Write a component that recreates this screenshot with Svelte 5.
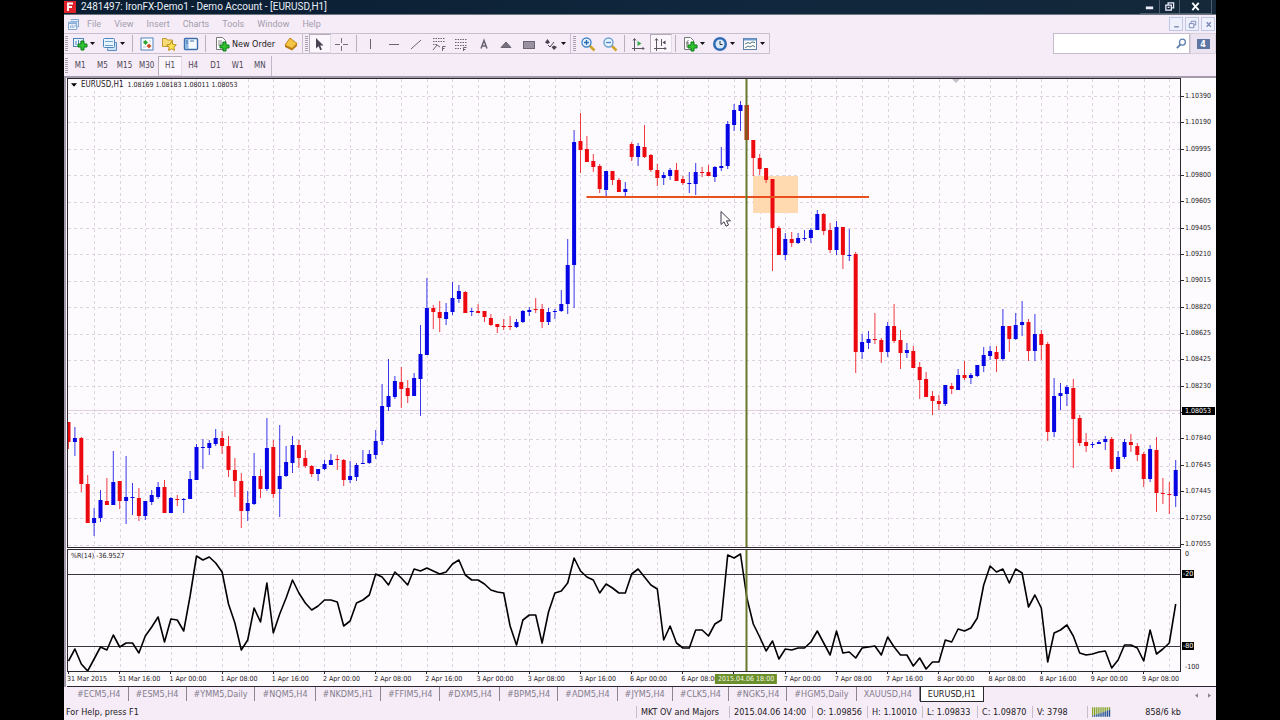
<script lang="ts">
	const STEP = 6.4;

	// high, body top, body bottom, low, colour
	const candleData = `
422 422 442 449 r|427 438 442 456 b|437 438 484 492 r|475 484 523 523 r|508 518 523 536 b|490 500 518 522 b
478 501 505 505 r|451 482 505 505 b|481 481 501 509 r|456 497 501 524 b|483 497 498 515 b|488 498 516 521 r
501 501 516 520 b|490 495 502 505 b|482 487 497 499 b|480 487 513 513 r|497 498 513 513 b|495 499 500 506 r
498 499 500 513 b|471 479 499 499 b|444 447 480 480 b|439 447 448 469 b|440 443 448 455 b|429 438 444 446 b
431 438 446 454 r|436 446 470 477 r|458 470 481 497 r|473 481 511 528 r|491 503 511 521 b|453 476 504 505 b
469 476 489 498 r|418 448 489 491 b|440 447 494 498 r|425 476 489 517 b|446 462 476 477 b|436 445 463 473 b
440 445 458 468 r|450 458 466 468 r|465 466 474 477 r|469 469 474 481 b|460 464 469 470 b|454 460 465 465 b
455 459 460 470 r|459 460 480 486 r|461 476 480 483 b|463 465 477 481 b|450 463 464 464 b|450 454 463 464 b
430 441 455 459 b|384 406 441 445 b|359 396 407 411 b|376 381 397 399 b|367 382 389 408 r|380 388 396 403 r
373 378 396 396 b|325 354 379 416 b|278 308 355 355 b|305 308 312 329 r|301 312 318 332 r|303 312 319 325 b
282 298 312 315 b|285 291 299 303 b|291 292 313 313 r|308 311 312 316 b|304 311 313 313 r|311 311 317 322 r
314 318 325 326 r|324 324 327 333 r|319 326 327 330 r|316 326 327 330 r|319 322 327 328 b|310 311 322 323 b
307 310 312 316 b|298 309 310 313 r|304 309 322 328 r|308 312 322 325 b|309 311 312 319 b|290 304 311 312 b
239 265 304 314 b|130 142 265 308 b|113 141 150 173 r|136 149 162 162 r|154 161 167 172 r|164 166 189 193 r
171 171 190 196 b|171 171 180 185 r|178 180 192 192 r|182 189 192 196 b|142 144 157 161 r|143 146 157 166 b
125 147 157 158 r|154 155 170 172 r|164 170 178 186 r|172 175 178 185 b|168 170 176 180 b|163 170 181 181 r
176 179 183 185 r|172 183 184 193 b|163 172 184 195 b|167 172 173 177 r|165 172 176 176 r|166 167 177 182 b
147 166 168 171 b|121 124 166 169 b|104 110 125 131 b|101 105 111 131 b|105 105 140 140 r|140 140 158 176 r
154 158 169 175 r|168 168 180 183 r|179 179 228 271 r|226 228 255 255 r|233 239 255 260 b|232 239 243 247 r
233 238 243 244 b|230 238 239 241 b|228 230 238 243 b|210 214 230 230 b|213 214 231 235 r|223 230 250 253 r
221 227 250 255 b|227 227 255 269 r|229 255 256 261 b|252 254 352 373 r|334 342 352 359 b|331 339 343 349 b
313 339 340 344 r|338 340 352 363 r|322 326 352 357 b|304 326 341 343 r|330 340 353 369 r|343 350 353 358 b
346 351 368 368 r|362 367 380 399 r|372 379 397 397 r|391 396 401 415 r|395 401 404 410 r|385 385 404 406 b
383 386 389 394 r|369 375 390 390 b|361 375 378 380 r|373 375 378 384 b|365 365 376 377 b|347 355 366 372 b
346 351 356 360 b|346 352 359 372 r|309 326 359 361 b|326 326 339 352 r|313 325 339 340 b|301 322 325 336 b
319 322 351 361 r|314 334 351 361 b|330 334 345 360 r|342 344 432 441 r|378 396 432 437 b|383 393 396 410 b
385 387 394 406 b|379 388 419 468 r|415 418 443 446 r|433 442 446 452 r|442 444 445 448 b|440 442 444 444 b
436 439 442 450 b|437 439 469 472 r|451 457 469 469 b|439 442 457 459 b|434 442 445 452 r|443 446 455 461 r
452 454 479 487 r|445 449 479 482 b|437 450 493 512 r|478 493 494 504 r|482 494 495 514 r|460 470 496 507 b`;

	const candles = candleData
		.trim()
		.split(/[|\n]/)
		.map((row, i) => {
			const [high, top, bottom, low, dir] = row.split(' ');
			return {
				x: 0.5 + i * STEP,
				high: +high,
				top: +top,
				height: Math.max(+bottom - +top, 1),
				low: +low,
				up: dir === 'b'
			};
		});

	const percentR = [
		661, 649, 664, 671, 659, 647, 650, 635, 647, 643, 643, 653, 636, 627, 617, 642, 619, 620, 631, 596,
		556, 560, 557, 563, 572, 604, 623, 650, 640, 608, 622, 583, 633, 614, 598, 580, 593, 603, 610, 606,
		600, 600, 602, 626, 621, 603, 600, 595, 574, 577, 585, 572, 578, 585, 569, 571, 568, 571, 574, 572,
		564, 560, 575, 580, 580, 584, 590, 592, 593, 626, 645, 620, 615, 615, 643, 612, 593, 591, 583, 558,
		571, 577, 580, 593, 584, 588, 593, 593, 574, 569, 577, 585, 589, 640, 626, 643, 648, 648, 630, 630,
		636, 624, 620, 555, 558, 554, 598, 624, 637, 651, 641, 659, 649, 650, 648, 648, 642, 631, 643, 655,
		631, 653, 652, 658, 648, 647, 646, 655, 637, 647, 655, 655, 666, 658, 669, 662, 662, 640, 642, 629,
		631, 628, 618, 585, 566, 572, 569, 583, 569, 573, 607, 595, 608, 662, 633, 630, 625, 636, 653, 655,
		654, 652, 651, 668, 660, 645, 645, 648, 661, 630, 654, 649, 643, 604
	];
	const linePoints = percentR.map((y, i) => `${(0.5 + i * STEP).toFixed(1)},${y}`).join(' ');

	const gridX = Array.from({ length: 43 }, (_, i) => Math.round(26 + i * 25.6) + 0.5);
	const gridY = Array.from({ length: 18 }, (_, i) => Math.round(96 + i * 26.4) + 0.5);

	const prices = [
		'1.10390', '1.10190', '1.09995', '1.09800', '1.09605', '1.09405', '1.09210', '1.09015', '1.08820',
		'1.08625', '1.08425', '1.08230', '1.08035', '1.07840', '1.07645', '1.07445', '1.07250', '1.07055'
	];
	const days = ['1 Apr', '2 Apr', '3 Apr', '6 Apr', '7 Apr', '8 Apr', '9 Apr'];
	const cursorSlot = '6 Apr 16:00';
	const times = [
		'31 Mar 2015',
		'31 Mar 16:00',
		...days.flatMap((d) => ['00:00', '08:00', '16:00'].map((t) => `${d} ${t}`))
	].slice(0, 22);

	const menus = ['File', 'View', 'Insert', 'Charts', 'Tools', 'Window', 'Help'];
	const timeframes = ['M1', 'M5', 'M15', 'M30', 'H1', 'H4', 'D1', 'W1', 'MN'];
	const tabs = [
		'#ECM5,H4', '#ESM5,H4', '#YMM5,Daily', '#NQM5,H4', '#NKDM5,H1', '#FFIM5,H4', '#DXM5,H4', '#BPM5,H4',
		'#ADM5,H4', '#JYM5,H4', '#CLK5,H4', '#NGK5,H4', '#HGM5,Daily', 'XAUUSD,H4', 'EURUSD,H1'
	];
	const drawTools = ['Vertical line', 'Horizontal line', 'Trendline', 'Fibonacci fan', 'Fibonacci retracement', 'Text', 'Triangle', 'Rectangle'];

	let timeframe = $state('H1');
	let activeTab = $state('EURUSD,H1');
	let search = $state('');
</script>

{#snippet plus(x: number, y: number)}
	<path
		d="M{x + 3} {y}h3v3h3v3h-3v3h-3v-3h-3v-3h3z"
		fill="#2fc32f"
		stroke="#0b7a18"
		stroke-width="1"
	/>
{/snippet}

{#snippet caret()}
	<svg class="caret" viewBox="0 0 5 3"><path d="M0 0h5L2.5 3z" fill="#111" /></svg>
{/snippet}

<div class="app">
	<header class="title">
		<svg class="logo" viewBox="0 0 12 12">
			<rect width="12" height="12" fill="#e0232b" />
			<path d="M4 10V2.5h5M4 6h4" fill="none" stroke="#fff" stroke-width="1.8" />
		</svg>
		<h1>2481497: IronFX-Demo1 - Demo Account - [EURUSD,H1]</h1>
		<div class="window-buttons">
			<button aria-label="Minimize"><svg viewBox="0 0 12 12"><path d="M2 6h8v3H2z" fill="#eef" /></svg></button>
			<button aria-label="Restore">
				<svg viewBox="0 0 12 12"><path d="M4.500 4V2h6v5.500h-2M2 4.500h6v5.500H2zM4 7h2" fill="none" stroke="#eef" stroke-width="1.4" /></svg>
			</button>
			<button class="wide" aria-label="Close"><svg viewBox="0 0 12 12"><path d="M2.500 2l7 8M9.500 2l-7 8" stroke="#fff" stroke-width="2" /></svg></button>
		</div>
	</header>

	<nav class="menu">
		<svg class="menu-icon" viewBox="0 0 12 12">
			<path d="M3 .5h8.500v8H9.500M.5 3.500h9v8h-9z" fill="#fff" stroke="#6f9cd0" />
			<path d="M3 2.500h8M1 5h8M2.500 7v3M4.500 6v4M6.500 7v3M8 6v2" stroke="#6f9cd0" />
		</svg>
		{#each menus as item}
			<button>{item}</button>
		{/each}
		<div class="mdi-buttons">
			<button aria-label="Minimize chart"><svg viewBox="0 0 12 12"><path d="M3.500 8.500h5" stroke="#7887b5" stroke-width="1.500" /></svg></button>
			<button aria-label="Restore chart">
				<svg viewBox="0 0 12 12"><path d="M4.500 4.500v-2h5v4h-2M2.500 5h5v4.500h-5z" fill="none" stroke="#7887b5" /></svg>
			</button>
			<button aria-label="Close chart"><svg viewBox="0 0 12 12"><path d="M4 3.500l4.500 5M8.500 3.500l-4.500 5" stroke="#7887b5" stroke-width="1.400" /></svg></button>
		</div>
	</nav>

	<div class="toolbar">
		<div class="group">
			<span class="grip"></span>
			<button class="drop" aria-label="New chart">
				<svg viewBox="0 0 16 16">
					<rect x="1.500" y="2.500" width="10" height="8" fill="#e9f3fc" stroke="#4d86bd" />
					<path d="M4 9V5M6.500 8V4M9 8V5" stroke="#4d86bd" />
					{@render plus(6, 5)}
				</svg>
				{@render caret()}
			</button>
			<button class="drop" aria-label="Profiles">
				<svg viewBox="0 0 16 16">
					<path d="M5.500 12.500v2h9v-8h-2" fill="#cfe1f4" stroke="#5a8cc0" />
					<rect x="1.500" y="2.500" width="11" height="9" rx="1" fill="#eaf4fd" stroke="#4d86bd" />
					<path d="M3 5.500h8M3 9.500h8" stroke="#6ea3d6" />
				</svg>
				{@render caret()}
			</button>
			<span class="sep"></span>
			<button aria-label="Market watch">
				<svg viewBox="0 0 16 16">
					<rect x="2" y="2" width="12" height="12" fill="#fff" stroke="#4d86bd" />
					<path d="M4 5h2M10 5h2M4 11h3" stroke="#a9c6e3" />
					<path d="M6.500 4l2.500 2.500-2.500 2.500L4 6.500z" fill="#2ca52c" />
					<path d="M10 7.500l2.500 2.500-2.500 2.500L7.500 10z" fill="#d1502b" />
				</svg>
			</button>
			<button aria-label="Navigator">
				<svg viewBox="0 0 16 16">
					<path d="M1.500 10.500v-8h4l1 1.500h5v6.500z" fill="#f7dd7a" stroke="#c19a2f" />
					<path d="M10.500 5.500l1.500 3 3.300.4-2.400 2.300.6 3.200-3-1.600-3 1.600.6-3.200L5.700 8.900 9 8.500z" fill="#ffe357" stroke="#bd8f17" />
				</svg>
			</button>
			<button aria-label="Terminal">
				<svg viewBox="0 0 16 16">
					<rect x="1.500" y="2.500" width="13" height="11" rx="1" fill="#f5faff" stroke="#3d6fab" stroke-width="1.400" />
					<path d="M2 3h3.500v10H2z" fill="#8fb9e2" /><path d="M7 5h4M3 5h2M3 7h2" stroke="#3d6fab" />
				</svg>
			</button>
			<span class="sep"></span>
			<button class="order">
				<svg viewBox="0 0 16 16">
					<path d="M2.500 1.500h6l3 3v9h-9z" fill="#fff" stroke="#777" />
					<path d="M4 5h4M4 7h5M4 9h3" stroke="#888" />
					{@render plus(6, 6)}
				</svg>
				New Order
			</button>
			<button aria-label="MetaEditor">
				<svg viewBox="0 0 16 16">
					<path d="M2 9l5-7 7 5.500v2.500l-5 4.500L2 11z" fill="#b87a14" />
					<path d="M2 9l5-7 7 5.500-5 5z" fill="#f4c544" stroke="#b87a14" stroke-width=".8" />
				</svg>
			</button>
		</div>
		<div class="group">
			<span class="grip"></span>
			<button class="pressed" aria-label="Cursor">
				<svg viewBox="0 0 16 16"><path d="M4 2v10.500l2.500-2.300 1.800 4 1.700-.8-1.800-3.900h3.300z" fill="#4b4352" /></svg>
			</button>
			<button aria-label="Crosshair">
				<svg viewBox="0 0 16 16"><path d="M7.500 2v5M7.500 10v5M1 8.500h5M9 8.500h5" stroke="#776e7d" /></svg>
			</button>
			<span class="sep"></span>
			<div class="draw">
				{#each drawTools as tool, i}
					<button aria-label={tool}>
						<svg viewBox="0 0 16 16" fill="none" stroke="#6b6371">
							{#if i === 0}
								<path d="M7.500 3v10" />
							{:else if i === 1}
								<path d="M3 8.500h10" />
							{:else if i === 2}
								<path d="M3 13L13 4" />
							{:else if i === 3}
								<path d="M2 2.500h12M2 5.500h12M2 8.500h4" stroke-dasharray="1.500 1" />
								<path d="M2 14l4-5 3 2M11.500 15v-4.500h3M11.500 12.500h2" />
							{:else if i === 4}
								<path d="M2 3.500h12M2 6.500h12M2 9.500h12M2 12.500h6" stroke-dasharray="1.500 1" />
								<path d="M10.500 15v-3.500h3M10.500 13.500h2" />
							{:else if i === 5}
								<path d="M5 12.500L8 4.500l3 8M6 10h4" stroke-width="1.500" />
							{:else if i === 6}
								<path d="M3 11.500L8 6l5 5.500z" fill="#77707d" />
							{:else}
								<rect x="2.500" y="5.500" width="11" height="7" fill="#99919f" />
							{/if}
						</svg>
					</button>
				{/each}
			</div>
			<button class="drop" aria-label="Arrows">
				<svg viewBox="0 0 16 16">
					<path d="M4.500 3L7 6.500 4.500 8 2 6.500zM11 9.500l3 1.500-3 3-2.500-3z" fill="#4b4352" />
					<path d="M5 9l2 2 4-5" fill="none" stroke="#4b4352" />
				</svg>
				{@render caret()}
			</button>
		</div>
		<div class="group">
			<span class="grip"></span>
			<button aria-label="Zoom in">
				<svg viewBox="0 0 16 16">
					<path d="M9.500 9.500l5 5" stroke="#d0a42b" stroke-width="2.500" />
					<circle cx="6.500" cy="6.500" r="4.500" fill="#eaf5ff" stroke="#4687c9" stroke-width="1.400" />
					<path d="M4 6.500h5M6.500 4v5" stroke="#2a6db5" stroke-width="1.400" />
				</svg>
			</button>
			<button aria-label="Zoom out">
				<svg viewBox="0 0 16 16">
					<path d="M9.500 9.500l5 5" stroke="#d0a42b" stroke-width="2.500" />
					<circle cx="6.500" cy="6.500" r="4.500" fill="#eaf5ff" stroke="#6ba0d3" stroke-width="1.400" />
					<path d="M4 6.500h5" stroke="#4687c9" stroke-width="1.400" />
				</svg>
			</button>
			<span class="sep"></span>
			<button aria-label="Auto scroll">
				<svg viewBox="0 0 16 16">
					<path d="M3.500 3v12M1 12.500h12M2 4.500l1.500-2L5 4.500M11.500 11l1.500 1.500-1.500 1.500" fill="none" stroke="#5d5663" />
					<path d="M6.500 5v5l4-2.500z" fill="#35a845" />
				</svg>
			</button>
			<button class="pressed" aria-label="Chart shift">
				<svg viewBox="0 0 16 16">
					<path d="M3.500 3v12M1 12.500h12M2 4.500l1.500-2L5 4.500M11.500 11l1.500 1.500-1.500 1.500M8.500 3v7" fill="none" stroke="#5d5663" />
					<path d="M12.500 4.500v4L9.500 6.500z" fill="#4b4352" />
				</svg>
			</button>
			<span class="sep"></span>
			<button class="drop" aria-label="Indicators">
				<svg viewBox="0 0 16 16">
					<path d="M2.500 1.500h6l3 3v9h-9z" fill="#fff" stroke="#777" />
					<path d="M6.500 4.500c-1.500 0-1.500 1-1.500 7M4 7h3" fill="none" stroke="#666" />
					{@render plus(6, 6)}
				</svg>
				{@render caret()}
			</button>
			<button class="drop" aria-label="Periods">
				<svg viewBox="0 0 16 16">
					<circle cx="8" cy="8" r="7" fill="#2f6cb3" />
					<circle cx="8" cy="8" r="4.500" fill="#d9eafa" />
					<path d="M8 5v3.500h2.500" fill="none" stroke="#333" />
				</svg>
				{@render caret()}
			</button>
			<button class="drop" aria-label="Templates">
				<svg viewBox="0 0 16 16">
					<rect x="1.500" y="2.500" width="13" height="11" fill="#fff" stroke="#5f7fa4" />
					<path d="M2 3.500h12" stroke="#6c9bd0" stroke-width="2" />
					<path d="M3 8l3-1.500 2 1 2-1.500 3 .5M3 12l3-2 2 1 3-1.500 2 1.500" fill="none" stroke="#4f6f78" />
				</svg>
				{@render caret()}
			</button>
		</div>
		<div class="search">
			<input type="text" aria-label="Search" bind:value={search} />
			<svg viewBox="0 0 12 12">
				<path d="M5 7l-4 4" stroke="#5b7dac" stroke-width="2" />
				<circle cx="7" cy="4.500" r="3.200" fill="#fff" stroke="#5b7dac" stroke-width="1.400" />
			</svg>
		</div>
		<button class="bubble" aria-label="Messages"><span>4</span></button>
	</div>

	<div class="toolbar frames">
		<span class="grip"></span>
		<div class="timeframes">
			{#each timeframes as tf}
				<button class:pressed={tf === timeframe} onclick={() => (timeframe = tf)}>{tf}</button>
			{/each}
		</div>
	</div>

	<main class="chart">
		<section class="pane price">
			<div class="plot">
				<p class="legend">
					<svg viewBox="0 0 7 4"><path d="M0 0h7L3.500 4z" /></svg>
					<span class="symbol">EURUSD,H1</span><span>1.08169 1.08183 1.08011 1.08053</span>
				</p>
				<svg class="canvas" viewBox="0 79 1112 468" preserveAspectRatio="none">
					<g class="grid">
						{#each gridX as x}<path d="M{x} 79V547" />{/each}
						{#each gridY as y}<path d="M0 {y}H1112" />{/each}
					</g>
					<path d="M0 410.500H1112" stroke="#e3cfdf" />
					<path d="M884 79h8l-4 4z" fill="#c5bfca" />
					<rect x="685" y="176" width="45" height="37" fill="#ffdab0" />
					{#each candles as c}
						<g class={c.up ? 'up' : 'down'}>
							<rect x={c.x - 0.5} y={c.high} width="1" height={c.low - c.high} opacity="0.8" />
							<rect x={c.x - 2} y={c.top} width="4" height={c.height} />
						</g>
					{/each}
					<path d="M518.500 197H801" stroke="#e8501f" stroke-width="2" />
					<path d="M678.500 79V547" stroke="#66792c" stroke-width="2" />
					<rect x="676.500" y="105" width="4" height="35" fill="#a1481c" />
					<path d="M678.500 105V140" stroke="#7c5c1e" stroke-width="1" />
					<path d="M653 211.500v13l3-2.700 2 4.400 2.500-1.200-2-4.200h4z" fill="#fff" stroke="#40394a" />
				</svg>
			</div>
			<div class="scale">
				{#each prices as price}<span>{price}</span>{/each}
				<strong>1.08053</strong>
			</div>
		</section>

		<section class="pane indicator">
			<div class="plot">
				<p class="legend">%R(14) -36.9527</p>
				<svg class="canvas" viewBox="0 550 1112 121" preserveAspectRatio="none">
					<g class="grid">
						{#each gridX as x}<path d="M{x} 550V671" />{/each}
					</g>
					<path d="M0 574.500H1112M0 646.500H1112" stroke="#3b3540" />
					<polyline points={linePoints} fill="none" stroke="#000" stroke-width="1.600" stroke-linejoin="round" />
					<path d="M678.500 550V671" stroke="#66792c" stroke-width="2" />
				</svg>
			</div>
			<div class="levels">
				<span>0</span>
				<strong class="upper">-20</strong>
				<strong class="lower">-80</strong>
				<span>-100</span>
			</div>
		</section>

		<div class="time-axis">
			<!-- the slot under the cursor label stays blank -->
			{#each times as time}<span>{time === cursorSlot ? '' : time}</span>{/each}
			<strong>2015.04.06 18:00</strong>
		</div>
	</main>

	<nav class="tabs">
		{#each tabs as tab}
			<button class:active={tab === activeTab} onclick={() => (activeTab = tab)}>{tab}</button>
		{/each}
		<div class="scroll">
			<button aria-label="Scroll tabs left"><svg viewBox="0 0 4 6"><path d="M4 0v6L0 3z" /></svg></button>
			<button aria-label="Scroll tabs right"><svg viewBox="0 0 4 6"><path d="M0 0v6l4-3z" /></svg></button>
		</div>
	</nav>

	<footer class="status">
		<span class="help">For Help, press F1</span>
		<span class="profile">MKT OV and Majors</span>
		<span class="date">2015.04.06 14:00</span>
		<span>O: 1.09856</span>
		<span>H: 1.10010</span>
		<span>L: 1.09833</span>
		<span>C: 1.09870</span>
		<span>V: 3798</span>
		<span class="traffic">
			<svg viewBox="0 0 20 10">
				{#each Array(10) as _, i}
					<path d="M{i * 2 + 0.5} 0v{9 - i * 0.7}" stroke="#86a52b" stroke-width="1.300" />
					<path d="M{i * 2 + 0.5} {9 - i * 0.7}V10" stroke="#1f4f8c" stroke-width="1.300" />
				{/each}
			</svg>
			858/6 kb
		</span>
	</footer>
</div>

<style>
	:global(body) {
		background: #000;
	}

	.app {
		display: flex;
		flex-direction: column;
		min-height: 100vh;
		margin: 0 64px;
		background: #f5ecf8;
		color: #1d1821;
		font-family: 'DejaVu Sans Condensed', 'DejaVu Sans', sans-serif;
		font-size: 9px;
		line-height: 12px;
	}

	button {
		display: flex;
		align-items: center;
		justify-content: center;
		margin: 0;
		padding: 0;
		border: 0;
		background: none;
		color: inherit;
		font: inherit;
		white-space: nowrap;
	}

	svg {
		display: block;
		flex: none;
	}

	.title {
		display: flex;
		align-items: center;
		height: 14px;
		border-bottom: 1px solid #6f7684;
		background: linear-gradient(90deg, #0a1d31, #10273d 60%, #14283a);
		color: #e9eef6;
	}

	.title h1 {
		flex: 1;
		margin: 0 0 0 5px;
		font-family: Roboto, sans-serif;
		font-size: 10px;
		font-weight: 400;
	}

	.logo {
		width: 12px;
		height: 12px;
	}

	.window-buttons {
		display: flex;
		align-self: stretch;
		margin-right: 4px;
	}

	.window-buttons button {
		width: 20px;
		border: 1px solid #4d5c6e;
		border-top: 0;
		border-left: 0;
	}

	.window-buttons .wide {
		width: 32px;
	}

	.window-buttons svg,
	.mdi-buttons svg,
	.menu-icon {
		width: 11px;
		height: 11px;
	}

	.menu {
		display: flex;
		align-items: center;
		gap: 13px;
		height: 18px;
		padding-left: 4px;
		color: #a39cab;
		font-family: Roboto, sans-serif;
	}

	.menu-icon {
		margin-right: -5px;
	}

	.mdi-buttons {
		display: flex;
		gap: 2px;
		margin-left: auto;
		margin-right: 1px;
	}

	.mdi-buttons button {
		width: 14px;
		height: 14px;
		border: 1px solid #bcc8e6;
		background: #eef0fc;
	}

	.toolbar {
		display: flex;
		align-items: stretch;
		height: 21px;
	}

	.group {
		display: flex;
		align-items: stretch;
		border: 1px solid #c9c0cf;
		border-left: 0;
	}

	.grip {
		flex: none;
		width: 3px;
		margin: 2px 1px;
		background: repeating-linear-gradient(#aaa1b0 0 1px, transparent 1px 2px);
	}

	.group + .group .grip {
		margin-left: 2px;
	}

	.sep {
		flex: none;
		width: 1px;
		margin: 1px 3px;
		background: #b9b0bf;
	}

	.group button {
		width: 22px;
	}

	.group svg {
		width: 16px;
		height: 16px;
	}

	.group .drop {
		justify-content: flex-start;
		gap: 2px;
		width: 30px;
		padding-left: 3px;
	}

	.group .caret {
		width: 5px;
		height: 3px;
	}

	.group .order {
		gap: 2px;
		width: 71px;
	}

	.group .pressed,
	.timeframes .pressed {
		border: 1px solid #b5acbb;
		border-right-color: #e4dbe8;
		border-bottom-color: #e4dbe8;
		background: #fbf7fd;
	}

	.draw {
		display: flex;
		width: 180px;
	}

	.draw button {
		flex: 1;
	}

	.search {
		display: flex;
		align-items: center;
		width: 137px;
		box-sizing: border-box;
		margin-left: auto;
		border: 1px solid #c5bccb;
		background: #fff;
	}

	.search input {
		flex: 1;
		min-width: 0;
		border: 0;
		outline: 0;
		background: none;
		font: inherit;
	}

	.search svg {
		width: 11px;
		height: 11px;
		margin-right: 2px;
	}

	.bubble {
		width: 26px;
		border: 1px solid #d9d0de;
		background: #ebe3f0;
	}

	.bubble span {
		width: 13px;
		height: 10px;
		background: #5d76a3;
		color: #fff;
		font-size: 9px;
		font-weight: 700;
		line-height: 10px;
	}

	.frames {
		height: 20px;
		padding-top: 2px;
		color: #4c4552;
		font-size: 8px;
	}

	.timeframes {
		display: flex;
		width: 202px;
		border-right: 1px solid #c0b7c6;
	}

	.timeframes button {
		flex: 1 1 0;
	}

	.chart {
		display: flex;
		flex: 1;
		flex-direction: column;
		border-top: 2px solid #a49aab;
		border-left: 2px solid #a49aab;
		padding-left: 1px;
		background: #fefbff;
		font-size: 7px;
		line-height: 8px;
	}

	.pane {
		display: flex;
	}

	.plot {
		position: relative;
		flex: 1;
		border: 1px solid #2c2631;
	}

	.price {
		flex: 1;
		margin-bottom: 1px;
	}

	.canvas {
		position: absolute;
		width: 100%;
		height: 100%;
	}

	.grid {
		stroke: #dfd2e1;
		stroke-dasharray: 3 3;
	}

	.up {
		fill: #0606e4;
	}

	.down {
		fill: #ec0a10;
	}

	.legend {
		position: absolute;
		z-index: 1;
		top: 2px;
		left: 3px;
		display: flex;
		align-items: center;
		gap: 4px;
		margin: 0;
	}

	.legend .symbol {
		font-size: 8px;
	}

	.legend svg {
		width: 6px;
		height: 4px;
	}

	.scale,
	.levels {
		position: relative;
		display: flex;
		flex-direction: column;
		justify-content: space-between;
		flex: none;
		width: 35px;
		box-sizing: border-box;
	}

	.scale {
		padding-top: 14px;
	}

	.scale span,
	.levels span {
		padding-left: 4px;
	}

	.scale span::before {
		content: '';
		float: left;
		width: 3px;
		height: 1px;
		margin: 4px 1px 0 -4px;
		background: #2c2631;
	}

	.scale strong,
	.levels strong {
		position: absolute;
		left: 1px;
		background: #000;
		color: #fff;
		font-weight: 400;
	}

	.scale strong {
		top: 70%;
		right: 1px;
		padding-left: 3px;
	}

	.indicator {
		height: 123px;
	}

	.levels {
		padding: 1px 0;
	}

	.levels strong {
		padding: 0 1px;
	}

	.levels .upper {
		top: 17%;
	}

	.levels .lower {
		top: 76%;
	}

	.time-axis {
		position: relative;
		display: flex;
		height: 14px;
		padding-right: 23px;
		border-bottom: 1px solid #2c2631;
	}

	.time-axis span {
		flex: 1 1 0;
		width: 0;
		white-space: nowrap;
	}

	.time-axis span::before {
		content: '';
		display: block;
		width: 1px;
		height: 2px;
		margin: 0 0 1px 1px;
		background: #2c2631;
	}

	.time-axis strong {
		position: absolute;
		top: 2px;
		left: 59.1%;
		transform: translateX(-50%);
		padding: 1px 3px;
		background: #6b8f2a;
		color: #f2f7e4;
		font-weight: 400;
		white-space: nowrap;
	}

	.tabs {
		display: flex;
		height: 16px;
		padding-left: 6px;
		color: #847c8b;
	}

	.tabs > button {
		height: 14px;
		padding: 0 7px;
		border-right: 1px solid #8d8594;
	}

	.tabs > .active {
		height: 15px;
		border: 1px solid #2c2631;
		border-top: 0;
		background: #fff;
		color: #1d1821;
	}

	.scroll {
		display: flex;
		gap: 10px;
		margin: 0 5px 0 auto;
	}

	.scroll svg {
		width: 3px;
		height: 5px;
		fill: #8d8594;
	}

	.status {
		display: flex;
		align-items: center;
		height: 17px;
	}

	.status span {
		flex: none;
		width: 55px;
		box-sizing: border-box;
		padding-left: 4px;
		border-left: 1px solid #c6bdcc;
		white-space: nowrap;
	}

	.status .help {
		flex: 1;
		padding-left: 2px;
		border: 0;
	}

	.status .profile {
		width: 93px;
	}

	.status .date {
		width: 83px;
	}

	.status .traffic {
		display: flex;
		align-items: center;
		justify-content: space-between;
		width: 129px;
		padding-right: 35px;
	}

	.traffic svg {
		width: 19px;
		height: 10px;
	}
</style>
